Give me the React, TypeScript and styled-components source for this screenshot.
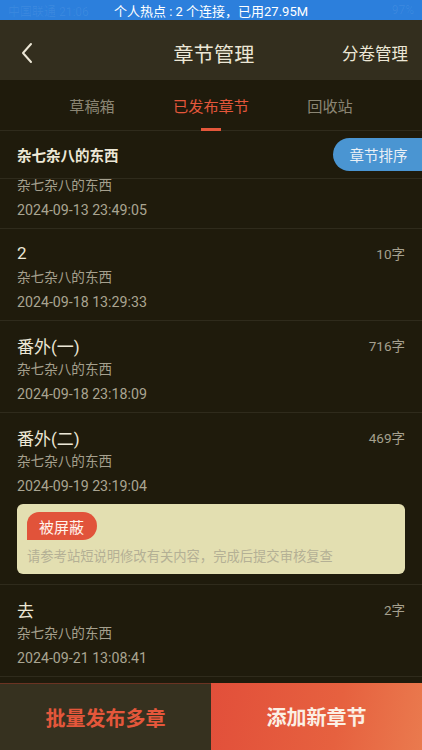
import React, { useLayoutEffect, useRef } from "react";
import styled, { createGlobalStyle } from "styled-components";

const GlobalStyle = createGlobalStyle`
  html, body { margin: 0; padding: 0; background: #1f1b0c; }
  body { font-family: Roboto, "Noto Sans CJK SC", "Noto Sans", sans-serif; }
  * { box-sizing: border-box; }
`;

const Page = styled.div`
  width: 422px;
  height: 750px;
  display: flex;
  flex-direction: column;
  background: #1f1b0c;
  overflow: hidden;
`;

const StatusBar = styled.div`
  height: 20px;
  flex: none;
  background: #2c7fdc;
  display: flex;
  align-items: center;
  justify-content: space-between;
  padding: 0 8px;
  font-size: 13px;
  color: #ffffff;
`;

const Ghost = styled.span<{ $right?: boolean }>`
  color: rgba(255, 255, 255, 0.07);
  font-size: 12px;
  width: 90px;
  text-align: ${(p) => (p.$right ? "right" : "left")};
`;

const NavBar = styled.div`
  height: 60px;
  flex: none;
  background: #332e1e;
  display: grid;
  grid-template-columns: 100px 1fr 100px;
  align-items: center;
  padding: 6px 14px 0 20px;
`;

const BackButton = styled.div`
  display: flex;
  align-items: center;
  height: 100%;
`;

const NavTitle = styled.div`
  text-align: center;
  font-size: 20px;
  color: #ece7d6;
  letter-spacing: 0.3px;
`;

const NavAction = styled.div`
  text-align: right;
  font-size: 16.5px;
  color: #ece7d6;
`;

const TabBar = styled.div`
  height: 51px;
  flex: none;
  display: flex;
  justify-content: center;
  border-bottom: 1px solid #2f2b1c;
  background: #1f1b0c;
`;

const Tab = styled.div<{ $active?: boolean }>`
  width: 119px;
  display: flex;
  flex-direction: column;
  align-items: center;
  justify-content: flex-end;
  font-size: 15.2px;
  color: ${(p) => (p.$active ? "#e4573b" : "#8b8674")};
`;

const TabLabel = styled.div`
  line-height: 22px;
`;

const TabLine = styled.div<{ $active?: boolean }>`
  width: 20px;
  height: 3px;
  margin-top: 10px;
  margin-bottom: -1px;
  background: ${(p) => (p.$active ? "#e4573b" : "transparent")};
`;

const VolumeHeader = styled.div`
  height: 48px;
  flex: none;
  display: flex;
  align-items: center;
  justify-content: space-between;
  padding-left: 17px;
  border-bottom: 1px solid #2f2b1c;
`;

const VolumeName = styled.div`
  font-size: 14.5px;
  font-weight: 700;
  color: #ece7d6;
`;

const SortButton = styled.div`
  width: 89px;
  height: 33px;
  border-radius: 17px 0 0 17px;
  background: #4a95d2;
  color: #e9f0f6;
  font-size: 14.5px;
  display: flex;
  align-items: center;
  justify-content: center;
  padding-left: 2px;
`;

const Scroller = styled.div`
  flex: 1;
  min-height: 0;
  overflow: hidden;
`;

const Item = styled.div`
  padding: 13px 17px 6px;
  border-bottom: 1px solid #2f2b1c;
`;

const TitleRow = styled.div`
  display: flex;
  justify-content: space-between;
  align-items: center;
  height: 22px;
`;

const Title = styled.div`
  font-size: 17px;
  color: #ece7d6;
`;

const Count = styled.div`
  font-size: 13.5px;
  color: #a5a08e;
`;

const Subtitle = styled.div`
  font-size: 13.6px;
  line-height: 26px;
  color: #a5a08e;
`;

const DateText = styled.div`
  font-size: 14.2px;
  line-height: 24px;
  color: #aaa592;
`;

const Notice = styled.div`
  margin: 6px 0 4px;
  height: 70px;
  background: #e3dfb1;
  border-radius: 6px;
  padding: 8px 10px 6px;
`;

const Badge = styled.div`
  display: inline-flex;
  align-items: center;
  height: 28px;
  padding: 0 13px 0 12px;
  background: #e1533a;
  color: #fff4ec;
  font-size: 15px;
  border-radius: 12px 14px 14px 0;
`;

const NoticeText = styled.div`
  margin-top: 6px;
  line-height: 22px;
  font-size: 13.3px;
  color: #b4b095;
`;

const BottomBar = styled.div`
  height: 67px;
  flex: none;
  display: grid;
  grid-template-columns: 211px 1fr;
`;

const BulkButton = styled.div`
  background: #36311f;
  border-top: 1px solid #6b3322;
  display: flex;
  align-items: center;
  justify-content: center;
  font-size: 20px;
  font-weight: 700;
  color: #e4573b;
`;

const AddButton = styled.div`
  background: linear-gradient(100deg, #e24f3a 0%, #e6613f 60%, #ea7a4e 100%);
  display: flex;
  align-items: center;
  justify-content: center;
  font-size: 20px;
  font-weight: 700;
  color: #fbefe4;
`;

type Chapter = {
  title: string;
  count: string;
  date: string;
  blocked?: boolean;
};

const chapters: Chapter[] = [
  { title: "1", count: "8字", date: "2024-09-13 23:49:05" },
  { title: "2", count: "10字", date: "2024-09-18 13:29:33" },
  { title: "番外(一)", count: "716字", date: "2024-09-18 23:18:09" },
  { title: "番外(二)", count: "469字", date: "2024-09-19 23:19:04", blocked: true },
  { title: "去", count: "2字", date: "2024-09-21 13:08:41" },
  { title: "来", count: "3字", date: "2024-09-22 10:02:11" },
];

const BackIcon = () => (
  <svg width="14" height="22" viewBox="0 0 14 22" fill="none">
    <path d="M11 2 L3 11 L11 20" stroke="#ece7d6" strokeWidth="2" strokeLinecap="round" strokeLinejoin="round" />
  </svg>
);

export default function App() {
  const scrollRef = useRef<HTMLDivElement>(null);
  useLayoutEffect(() => {
    if (scrollRef.current) scrollRef.current.scrollTop = 42;
  }, []);

  return (
    <Page>
      <GlobalStyle />
      <StatusBar>
        <Ghost>中国联通 21:06</Ghost>
        <span>个人热点 : 2 个连接，已用27.95M</span>
        <Ghost $right>97%</Ghost>
      </StatusBar>
      <NavBar>
        <BackButton>
          <BackIcon />
        </BackButton>
        <NavTitle>章节管理</NavTitle>
        <NavAction>分卷管理</NavAction>
      </NavBar>
      <TabBar>
        {["草稿箱", "已发布章节", "回收站"].map((t, i) => (
          <Tab key={t} $active={i === 1}>
            <TabLabel>{t}</TabLabel>
            <TabLine $active={i === 1} />
          </Tab>
        ))}
      </TabBar>
      <VolumeHeader>
        <VolumeName>杂七杂八的东西</VolumeName>
        <SortButton>章节排序</SortButton>
      </VolumeHeader>
      <Scroller ref={scrollRef}>
        {chapters.map((c) => (
          <Item key={c.date}>
            <TitleRow>
              <Title>{c.title}</Title>
              <Count>{c.count}</Count>
            </TitleRow>
            <Subtitle>杂七杂八的东西</Subtitle>
            <DateText>{c.date}</DateText>
            {c.blocked && (
              <Notice>
                <Badge>被屏蔽</Badge>
                <NoticeText>请参考站短说明修改有关内容，完成后提交审核复查</NoticeText>
              </Notice>
            )}
          </Item>
        ))}
      </Scroller>
      <BottomBar>
        <BulkButton>批量发布多章</BulkButton>
        <AddButton>添加新章节</AddButton>
      </BottomBar>
    </Page>
  );
}
